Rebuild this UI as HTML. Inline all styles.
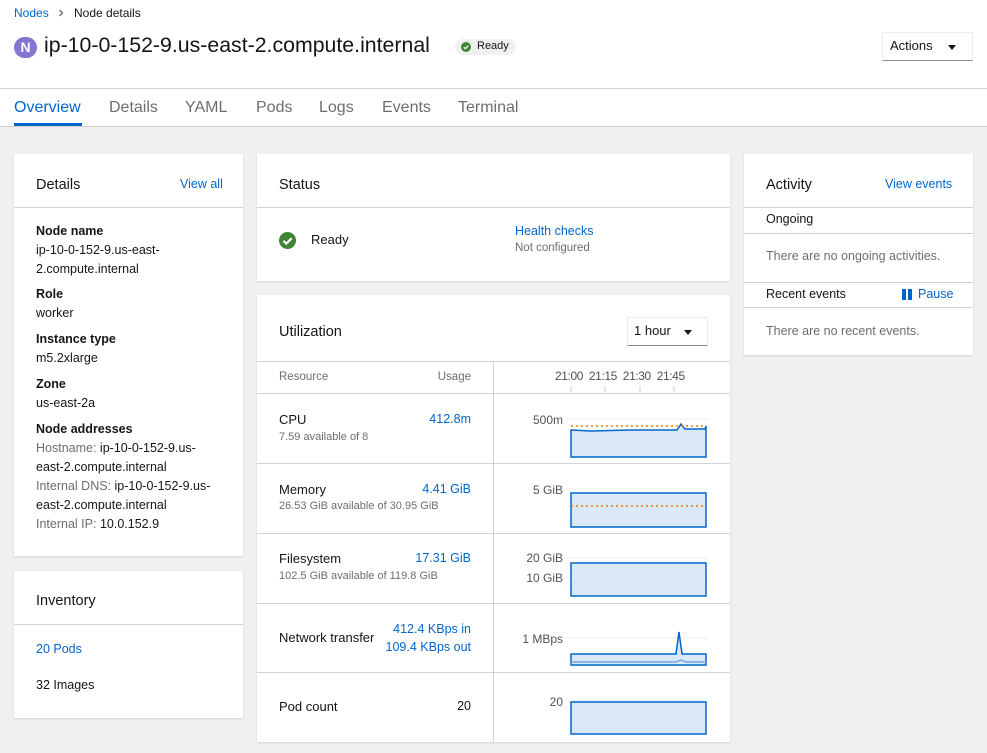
<!DOCTYPE html>
<html><head><meta charset="utf-8"><style>
*{margin:0;padding:0;box-sizing:border-box}
body{width:987px;height:753px;overflow:hidden;background:#f0f0f0;font-family:"Liberation Sans",sans-serif;font-size:12.5px;color:#151515;position:relative}
.t{position:absolute;white-space:nowrap;line-height:1.2}
.r{position:absolute;white-space:nowrap;line-height:1.2;right:516px;text-align:right}
.b{position:absolute;background:#fff;box-shadow:0 1px 2px rgba(3,3,3,.12)}
.h{position:absolute;height:1px;background:#d2d2d2}
.v{position:absolute;width:1px;background:#d2d2d2}
.l{color:#0066cc}
.g{color:#6a6e73}
.ct{font-size:14.5px}
.bold{font-weight:bold;font-size:12.5px}
</style></head><body>
<div style="position:absolute;left:0;top:0;width:987px;height:127px;background:#fff;border-bottom:1px solid #d2d2d2"></div>
<div class="h" style="left:0;top:88px;width:987px"></div>
<div class="t l" style="left:14px;top:6px;font-size:12px">Nodes</div>
<svg style="position:absolute;left:58px;top:9px" width="6" height="8" viewBox="0 0 6 8"><path d="M1.5 1l3 3-3 3" stroke="#6a6e73" stroke-width="1.3" fill="none"/></svg>
<div class="t" style="left:74px;top:6px;font-size:12px">Node details</div>
<div style="position:absolute;left:14px;top:37px;width:23px;height:21px;border-radius:11px;background:#8476d1;color:#fff;font-weight:bold;font-size:14px;text-align:center;line-height:21px">N</div>
<div class="t" style="left:44px;top:33px;font-size:21.3px">ip-10-0-152-9.us-east-2.compute.internal</div>
<div style="position:absolute;left:455px;top:39px;width:61px;height:16px;border-radius:8px;background:#f0f0f0"></div>
<svg style="position:absolute;left:461px;top:42px" width="10" height="10" viewBox="0 0 10 10"><circle cx="5" cy="5" r="5" fill="#3e8635"/><path d="M2.8 5.2l1.5 1.5 3-3" stroke="#fff" stroke-width="1.3" fill="none"/></svg>
<div class="t" style="left:477px;top:40px;font-size:11px">Ready</div>
<div style="position:absolute;left:882px;top:32px;width:91px;height:29px;border:1px solid #ececec;border-bottom:1px solid #8a8d90"></div>
<div class="t" style="left:890px;top:38px;font-size:13px">Actions</div>
<div style="position:absolute;left:948px;top:45px;border-left:4px solid transparent;border-right:4px solid transparent;border-top:5px solid #151515"></div>
<div class="t l" style="left:14px;top:98px;font-size:16px">Overview</div>
<div style="position:absolute;left:14px;top:123px;width:68px;height:3px;background:#0066cc"></div>
<div class="t g" style="left:109px;top:98px;font-size:16px">Details</div>
<div class="t g" style="left:185px;top:98px;font-size:16px">YAML</div>
<div class="t g" style="left:256px;top:98px;font-size:16px">Pods</div>
<div class="t g" style="left:319px;top:98px;font-size:16px">Logs</div>
<div class="t g" style="left:382px;top:98px;font-size:16px">Events</div>
<div class="t g" style="left:458px;top:98px;font-size:16px">Terminal</div>

<!-- Details -->
<div class="b" style="left:14px;top:154px;width:229px;height:402px"></div>
<div class="t ct" style="left:36px;top:177px">Details</div>
<div class="t l" style="left:180px;top:177px;font-size:12.5px">View all</div>
<div class="h" style="left:14px;top:207px;width:229px"></div>
<div class="t bold" style="left:36px;top:224px">Node name</div>
<div class="t" style="left:36px;top:243px">ip-10-0-152-9.us-east-</div>
<div class="t" style="left:36px;top:262px">2.compute.internal</div>
<div class="t bold" style="left:36px;top:287px">Role</div>
<div class="t" style="left:36px;top:306px">worker</div>
<div class="t bold" style="left:36px;top:332px">Instance type</div>
<div class="t" style="left:36px;top:351px">m5.2xlarge</div>
<div class="t bold" style="left:36px;top:377px">Zone</div>
<div class="t" style="left:36px;top:396px">us-east-2a</div>
<div class="t bold" style="left:36px;top:422px">Node addresses</div>
<div class="t g" style="left:36px;top:441px">Hostname: <span style="color:#151515">ip-10-0-152-9.us-</span></div>
<div class="t" style="left:36px;top:460px">east-2.compute.internal</div>
<div class="t g" style="left:36px;top:479px">Internal DNS: <span style="color:#151515">ip-10-0-152-9.us-</span></div>
<div class="t" style="left:36px;top:498px">east-2.compute.internal</div>
<div class="t g" style="left:36px;top:517px">Internal IP: <span style="color:#151515">10.0.152.9</span></div>

<!-- Inventory -->
<div class="b" style="left:14px;top:571px;width:229px;height:147px"></div>
<div class="t ct" style="left:36px;top:593px">Inventory</div>
<div class="h" style="left:14px;top:624px;width:229px"></div>
<div class="t l" style="left:36px;top:642px">20 Pods</div>
<div class="t" style="left:36px;top:678px">32 Images</div>

<!-- Status -->
<div class="b" style="left:257px;top:154px;width:473px;height:127px"></div>
<div class="t ct" style="left:279px;top:177px">Status</div>
<div class="h" style="left:257px;top:207px;width:473px"></div>
<svg style="position:absolute;left:279px;top:232px" width="17" height="17" viewBox="0 0 17 17"><circle cx="8.5" cy="8.5" r="8.5" fill="#3e8635"/><path d="M4.5 8.8l2.8 2.8 5.3-5.3" stroke="#fff" stroke-width="2.2" fill="none"/></svg>
<div class="t" style="left:311px;top:232px;font-size:13px">Ready</div>
<div class="t l" style="left:515px;top:224px">Health checks</div>
<div class="t g" style="left:515px;top:242px;font-size:11.5px">Not configured</div>

<!-- Utilization -->
<div class="b" style="left:257px;top:295px;width:473px;height:447px"></div>
<div class="t ct" style="left:279px;top:324px">Utilization</div>
<div style="position:absolute;left:627px;top:317px;width:81px;height:29px;border:1px solid #ececec;border-bottom:1px solid #8a8d90"></div>
<div class="t" style="left:634px;top:323px;font-size:13px">1 hour</div>
<div style="position:absolute;left:684px;top:330px;border-left:4px solid transparent;border-right:4px solid transparent;border-top:5px solid #151515"></div>
<div class="h" style="left:257px;top:361px;width:473px"></div>
<div class="v" style="left:493px;top:361px;height:381px"></div>
<div class="t g" style="left:279px;top:371px;font-size:11.5px">Resource</div>
<div class="r g" style="top:371px;font-size:11.5px">Usage</div>
<div class="t g" style="left:555px;top:369px;font-size:12px;color:#4f5255;letter-spacing:-0.4px">21:00 &nbsp;21:15 &nbsp;21:30 &nbsp;21:45</div>
<div class="h" style="left:257px;top:393px;width:473px"></div>
<div class="h" style="left:257px;top:463px;width:473px"></div>
<div class="h" style="left:257px;top:533px;width:473px"></div>
<div class="h" style="left:257px;top:603px;width:473px"></div>
<div class="h" style="left:257px;top:672px;width:473px"></div>

<div class="t" style="left:279px;top:412px;font-size:13px">CPU</div>
<div class="t g" style="left:279px;top:431px;font-size:11px">7.59 available of 8</div>
<div class="r l" style="top:412px">412.8m</div>
<div class="t" style="left:279px;top:482px;font-size:13px">Memory</div>
<div class="t g" style="left:279px;top:500px;font-size:11px">26.53 GiB available of 30.95 GiB</div>
<div class="r l" style="top:482px">4.41 GiB</div>
<div class="t" style="left:279px;top:551px;font-size:13px">Filesystem</div>
<div class="t g" style="left:279px;top:570px;font-size:11px">102.5 GiB available of 119.8 GiB</div>
<div class="r l" style="top:551px">17.31 GiB</div>
<div class="t" style="left:279px;top:630px;font-size:13px">Network transfer</div>
<div class="r l" style="top:622px">412.4 KBps in</div>
<div class="r l" style="top:640px">109.4 KBps out</div>
<div class="t" style="left:279px;top:699px;font-size:13px">Pod count</div>
<div class="r" style="top:699px">20</div>

<svg style="position:absolute;left:494px;top:362px" width="236" height="380" viewBox="494 362 236 380" font-family="Liberation Sans" font-size="12" fill="#4f5255">
<g stroke="#d2d2d2"><line x1="571" y1="392" x2="571" y2="386"/><line x1="605" y1="392" x2="605" y2="386"/><line x1="640" y1="392" x2="640" y2="386"/><line x1="674" y1="392" x2="674" y2="386"/></g>
<g stroke="#ececec"><line x1="566" y1="419" x2="708" y2="419"/><line x1="566" y1="489" x2="708" y2="489"/><line x1="566" y1="558" x2="708" y2="558"/><line x1="566" y1="577" x2="708" y2="577"/><line x1="566" y1="638" x2="708" y2="638"/><line x1="566" y1="701" x2="708" y2="701"/></g>
<text x="563" y="424" text-anchor="end">500m</text>
<text x="563" y="494" text-anchor="end">5 GiB</text>
<text x="563" y="562" text-anchor="end">20 GiB</text>
<text x="563" y="582" text-anchor="end">10 GiB</text>
<text x="563" y="643" text-anchor="end">1 MBps</text>
<text x="563" y="706" text-anchor="end">20</text>
<g fill="#dbe8f7" stroke="#0066cc" stroke-width="1.5">
<path d="M571 457V430l20 1 40-1 46 0 4-6 4 5 20 0 1-3V457Z"/>
<path d="M571 527V493l40 0 40 0 55 0V527Z"/>
<path d="M571 596V563H706V596Z"/>
<path d="M571 665V654h105l3-22 3 22h24V665Z"/>
<path d="M571 734V702H706V734Z"/>
</g>
<path d="M571 662h105l5-2 5 2h20" stroke="#73a5e0" stroke-width="1.5" fill="none"/>
<line x1="571" y1="426" x2="706" y2="426" stroke="#ec7a08" stroke-width="1.5" stroke-dasharray="2 3"/>
<line x1="571" y1="506" x2="706" y2="506" stroke="#ec7a08" stroke-width="1.5" stroke-dasharray="2 3"/>
</svg>

<!-- Activity -->
<div class="b" style="left:744px;top:154px;width:229px;height:201px"></div>
<div class="t ct" style="left:766px;top:177px">Activity</div>
<div class="t l" style="left:885px;top:177px">View events</div>
<div class="h" style="left:744px;top:207px;width:229px"></div>
<div class="t" style="left:766px;top:212px">Ongoing</div>
<div class="h" style="left:744px;top:233px;width:229px"></div>
<div class="t g" style="left:766px;top:249px">There are no ongoing activities.</div>
<div class="h" style="left:744px;top:282px;width:229px"></div>
<div class="t" style="left:766px;top:287px">Recent events</div>
<div style="position:absolute;left:902px;top:289px;width:4px;height:11px;background:#0066cc"></div>
<div style="position:absolute;left:908px;top:289px;width:4px;height:11px;background:#0066cc"></div>
<div class="t l" style="left:918px;top:287px">Pause</div>
<div class="h" style="left:744px;top:307px;width:229px"></div>
<div class="t g" style="left:766px;top:324px">There are no recent events.</div>
</body></html>
